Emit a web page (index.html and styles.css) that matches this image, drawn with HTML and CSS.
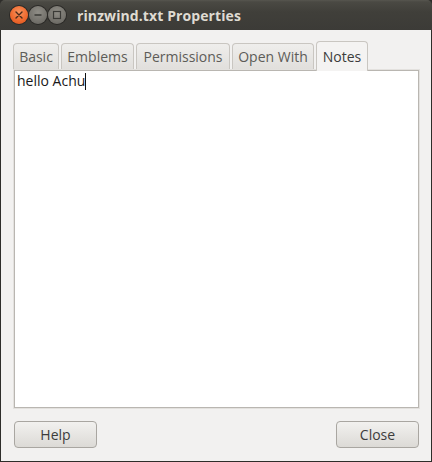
FILE: index.html
```html
<!DOCTYPE html>
<html>
<head>
<meta charset="utf-8">
<link rel="stylesheet" href="styles.css">
</head>
<body>
<div class="window">
  <div class="titlebar">
    <div class="controls">
      <span class="wbtn close"><svg width="18" height="18" viewBox="0 0 18 18"><path d="M6 6 L12 12 M12 6 L6 12" stroke="#4a2a1a" stroke-width="1.4" stroke-linecap="round"/></svg></span>
      <span class="wbtn min"><svg width="18" height="18" viewBox="0 0 18 18"><path d="M5.5 9 H12.5" stroke="#3a3a36" stroke-width="1.5"/></svg></span>
      <span class="wbtn max"><svg width="18" height="18" viewBox="0 0 18 18"><rect x="5.5" y="5.5" width="7" height="7" fill="none" stroke="#3a3a36" stroke-width="1.2"/></svg></span>
    </div>
    <div class="title">rinzwind.txt Properties</div>
  </div>
  <div class="content">
    <div class="tabs">
      <div class="tab t-basic">Basic</div>
      <div class="tab t-emblems">Emblems</div>
      <div class="tab t-perm">Permissions</div>
      <div class="tab t-open">Open With</div>
      <div class="tab t-notes active">Notes</div>
    </div>
    <div class="notes"><span class="text">hello Achu</span><span class="caret"></span></div>
    <div class="buttons">
      <div class="btn">Help</div>
      <div class="btn">Close</div>
    </div>
  </div>
</div>
</body>
</html>
```

FILE: styles.css
```css
html, body {
  margin: 0;
  padding: 0;
  background: #3c3b37;
}
.window {
  width: 432px;
  height: 462px;
  box-sizing: border-box;
  display: flex;
  flex-direction: column;
  font-family: "Open Sans", "DejaVu Sans", sans-serif;
  background: #2e2d2a;
  padding: 0 1px 1px 1px;
}
.titlebar {
  height: 30px;
  flex: none;
  display: flex;
  align-items: center;
  background: linear-gradient(#57564f 0, #4a4943 2px, #403f3a 12px, #3c3b37 30px);
  margin: 0 -1px;
  border-radius: 5px 5px 0 0;
  padding-left: 10px;
}
.controls {
  display: flex;
  gap: 1px;
}
.wbtn {
  width: 18px;
  height: 18px;
  border-radius: 50%;
  display: flex;
}
.wbtn.close {
  background: radial-gradient(circle at 50% 35%, #f7945f 0, #ef6a2f 55%, #d4501a 100%);
  box-shadow: 0 0 0 1px #2b2a27;
}
.wbtn.min, .wbtn.max {
  background: radial-gradient(circle at 50% 35%, #8f8d86 0, #75736d 60%, #5f5e59 100%);
  box-shadow: 0 0 0 1px #2b2a27;
}
.title {
  margin-left: 11px;
  color: #dfdbd2;
  font-weight: bold;
  font-size: 14px;
  letter-spacing: 0.1px;
  padding-top: 1px;
}
.content {
  flex: 1;
  background: #f2f1f0;
  display: flex;
  flex-direction: column;
  padding: 10px 12px 13px 12px;
}
.tabs {
  display: flex;
  align-items: flex-end;
  height: 30px;
  gap: 2px;
  position: relative;
  z-index: 1;
}
.tab {
  height: 26px;
  box-sizing: border-box;
  border: 1px solid #c9c6c1;
  border-bottom: none;
  border-radius: 4px 4px 0 0;
  background: linear-gradient(#efeeec, #e1dfdc);
  color: #5d5c58;
  font-size: 14px;
  display: flex;
  align-items: center;
  justify-content: center;
  margin-bottom: 1px;
}
.t-basic { width: 46px; }
.t-emblems { width: 73px; }
.t-perm { width: 94px; }
.t-open { width: 82px; }
.t-notes { width: 52px; }
.tab.active {
  height: 30px;
  background: #f4f3f2;
  color: #3c3c3c;
  margin-bottom: -1px;
}
.notes {
  flex: 1;
  margin: 0 0 0 1px;
  background: #ffffff;
  border: 1px solid #b9b6b1;
  box-shadow: 0 0 0 1px #e3e1de;
  padding: 0 2px;
  font-size: 14px;
  color: #1a1a1a;
  display: flex;
  align-items: flex-start;
}
.caret {
  width: 1px;
  height: 17px;
  background: #111;
  margin-top: 2px;
}
.buttons {
  display: flex;
  justify-content: space-between;
  margin-top: 13px;
  padding-left: 1px;
}
.btn {
  width: 83px;
  height: 27px;
  box-sizing: border-box;
  border: 1px solid #a9a6a1;
  border-radius: 4px;
  background: linear-gradient(#f2f1ef, #dcdad6);
  display: flex;
  align-items: center;
  justify-content: center;
  color: #3c3c3c;
  font-size: 14px;
}
```
